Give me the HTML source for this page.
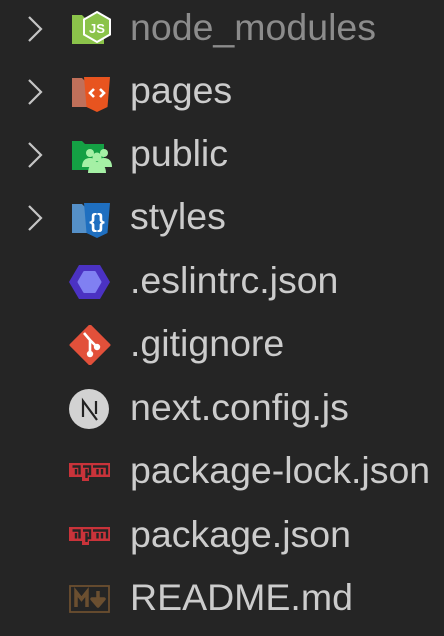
<!DOCTYPE html>
<html><head><style>
html,body{margin:0;padding:0;background:#252525;width:444px;height:636px;overflow:hidden}
.r{position:absolute;left:0;height:63px;width:444px}
.t{position:absolute;left:130px;top:50%;transform:translateY(-54%);font-family:"Liberation Sans",sans-serif;font-size:37.5px;color:#cccccc;white-space:nowrap}
.ch{position:absolute;left:26px;top:50%;margin-top:-14px}
.ic{position:absolute;left:68px;top:50%;margin-top:-20px}
</style></head><body>

<div class="r" style="top:-3px">
<svg class="ch" width="20" height="28" viewBox="0 0 20 28"><path d="M3 2 L15 14 L3 26" stroke="#c5c5c5" stroke-width="2.2" fill="none"/></svg>
<svg class="ic" width="44" height="40" viewBox="0 0 44 40"><path d="M4 6h10l3 3h19v26H4z" fill="#8bc34a"/><path d="M29 3l13 7.5v15L29 33l-13-7.5v-15z" fill="#8bc34a" stroke="#fff" stroke-width="2"/><text x="29" y="24" font-family="Liberation Sans" font-size="13" fill="#fff" text-anchor="middle" font-weight="bold">JS</text></svg>
<div class="t" style="color:#8c8c8c">node_modules</div></div>

<div class="r" style="top:60px">
<svg class="ch" width="20" height="28" viewBox="0 0 20 28"><path d="M3 2 L15 14 L3 26" stroke="#c5c5c5" stroke-width="2.2" fill="none"/></svg>
<svg class="ic" width="44" height="40" viewBox="0 0 44 40"><path d="M4 6h10l3 3h19v26H4z" fill="#c0705a"/><path d="M16 5h26l-2.5 30L29 40l-10.5-5z" fill="#e8541f"/><path d="M26 17l-4 4 4 4M32 17l4 4-4 4" stroke="#fff" stroke-width="2.6" fill="none"/></svg>
<div class="t">pages</div></div>

<div class="r" style="top:123px">
<svg class="ch" width="20" height="28" viewBox="0 0 20 28"><path d="M3 2 L15 14 L3 26" stroke="#c5c5c5" stroke-width="2.2" fill="none"/></svg>
<svg class="ic" width="44" height="40" viewBox="0 0 44 40"><path d="M4 6h10l3 3h19v26H4z" fill="#14a044"/><g fill="#a5f0a5"><circle cx="22" cy="18" r="4"/><circle cx="36" cy="18" r="4"/><circle cx="29" cy="22" r="4.5"/><path d="M14 32c0-6 3-9 8-9s6 2 6 5v4z"/><path d="M44 32c0-6-3-9-8-9s-6 2-6 5v4z"/><path d="M20 38c0-7 4-11 9-11s9 4 9 11z"/></g></svg>
<div class="t">public</div></div>

<div class="r" style="top:186px">
<svg class="ch" width="20" height="28" viewBox="0 0 20 28"><path d="M3 2 L15 14 L3 26" stroke="#c5c5c5" stroke-width="2.2" fill="none"/></svg>
<svg class="ic" width="44" height="40" viewBox="0 0 44 40"><path d="M4 6h10l3 3h19v26H4z" fill="#5590c8"/><path d="M16 5h26l-2.5 30L29 40l-10.5-5z" fill="#1f6fc0"/><text x="29" y="30" font-family="Liberation Sans" font-size="20" fill="#fff" text-anchor="middle" font-weight="bold">{}</text></svg>
<div class="t">styles</div></div>

<div class="r" style="top:250px">
<svg class="ic" width="44" height="40" viewBox="0 0 44 40"><path d="M1 20L11 3h21l10 17-10 17H11z" fill="#4b32c3"/><path d="M11 20l5.5-9.5h10L32 20l-5.5 9.5h-10z" fill="#8080f2" stroke="#8080f2" stroke-width="3" stroke-linejoin="round"/></svg>
<div class="t">.eslintrc.json</div></div>

<div class="r" style="top:313px">
<svg class="ic" width="44" height="40" viewBox="0 0 44 40"><path d="M22 1l19 19-19 19L3 20z" fill="#e2503a" stroke="#e2503a" stroke-width="3" stroke-linejoin="round"/><path d="M16 8l6 7v14M22 15l7 7" stroke="#fff" stroke-width="2.6" fill="none"/><circle cx="22" cy="29" r="3.2" fill="#fff"/><circle cx="29" cy="22" r="3.2" fill="#fff"/></svg>
<div class="t">.gitignore</div></div>

<div class="r" style="top:377px">
<svg class="ic" width="44" height="40" viewBox="0 0 44 40"><circle cx="21" cy="20" r="20" fill="#d2d2d2"/><path d="M15 28V12l14 19M28 12v13" stroke="#222" stroke-width="2.2" fill="none"/></svg>
<div class="t">next.config.js</div></div>

<div class="r" style="top:440px">
<svg class="ic" width="44" height="40" viewBox="0 0 44 40"><path d="M1 11h41v14H21v4h-7v-4H1z" fill="#c9333a"/><path d="M4.5 14.5h7v8M8 17v5.5M15 14.5h7v7.5h-3.5M18.5 17v9M25 14.5h14v8M29.5 17v5.5M34 17v5.5" stroke="#252525" stroke-width="2.4" fill="none"/></svg>
<div class="t">package-lock.json</div></div>

<div class="r" style="top:504px">
<svg class="ic" width="44" height="40" viewBox="0 0 44 40"><path d="M1 11h41v14H21v4h-7v-4H1z" fill="#c9333a"/><path d="M4.5 14.5h7v8M8 17v5.5M15 14.5h7v7.5h-3.5M18.5 17v9M25 14.5h14v8M29.5 17v5.5M34 17v5.5" stroke="#252525" stroke-width="2.4" fill="none"/></svg>
<div class="t">package.json</div></div>

<div class="r" style="top:567px">
<svg class="ic" width="44" height="40" viewBox="0 0 44 40"><rect x="2" y="7" width="39" height="26" fill="none" stroke="#6b4f30" stroke-width="1.8"/><path d="M8 28V13l5.5 7 5.5-7v15" stroke="#6b4f30" stroke-width="3.5" fill="none"/><path d="M30 12v9M24 20l6 7 6-7z" stroke="#6b4f30" stroke-width="3.5" fill="#6b4f30" stroke-linejoin="round"/></svg>
<div class="t">README.md</div></div>

</body></html>
